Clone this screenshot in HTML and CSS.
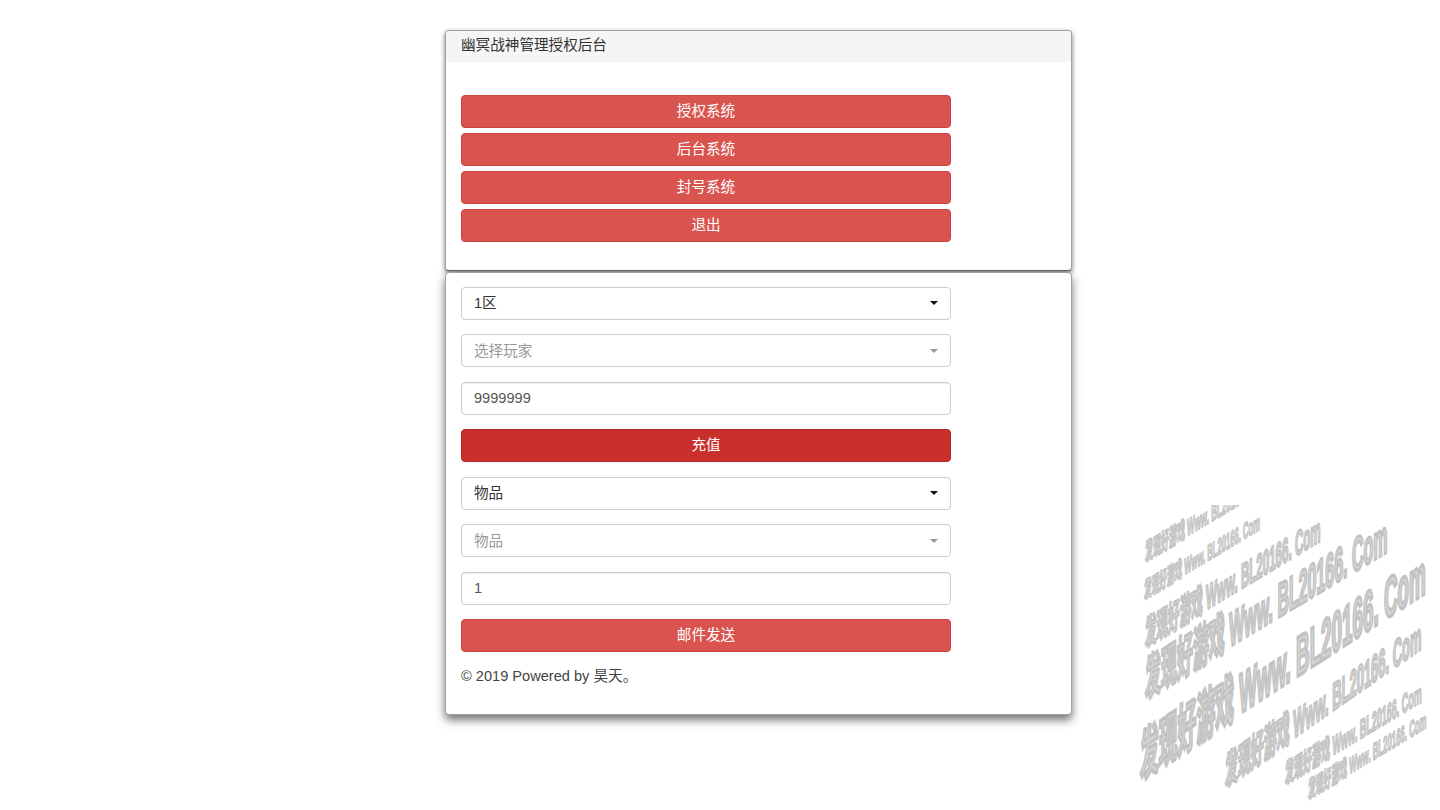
FILE: index.html
```html
<!DOCTYPE html>
<html lang="en">

<head>
    <meta charset="UTF-8" />
    <meta name="viewport" content="width=device-width, initial-scale=1" />
    <title>幽冥战神管理授权后台</title>
    <link rel="stylesheet" href="styles.css">
</head>

<body>

    <main class="page">
        <section class="panel panel-top">
            <div class="panel-heading">幽冥战神管理授权后台</div>
            <div class="panel-body menu-body">
                <button class="btn">授权系统</button>
                <button class="btn">后台系统</button>
                <button class="btn">封号系统</button>
                <button class="btn">退出</button>
            </div>
        </section>

        <section class="panel panel-bottom">
            <div class="panel-body form-body">
                <button class="picker"><span>1区</span><span class="caret"></span></button>
                <button class="picker muted"><span>选择玩家</span><span class="caret"></span></button>
                <input class="field" type="text" value="9999999">
                <button class="btn btn-active">充值</button>
                <button class="picker"><span>物品</span><span class="caret"></span></button>
                <button class="picker muted"><span>物品</span><span class="caret"></span></button>
                <input class="field" type="text" value="1">
                <button class="btn">邮件发送</button>
                <p class="copyright">© 2019 Powered by 昊天。</p>
            </div>
        </section>
    </main>

    <!-- watermark, bottom right corner -->
    <div class="watermark">
        <div class="wm wm-1">发现好游戏 Www. BL20166. Com</div>
        <div class="wm wm-2">发现好游戏 Www. BL20166. Com</div>
        <div class="wm wm-3">发现好游戏 Www. BL20166. Com</div>
        <div class="wm wm-4">发现好游戏 Www. BL20166. Com</div>
        <div class="wm wm-5">发现好游戏 Www. BL20166. Com</div>
        <div class="wm wm-6">发现好游戏 Www. BL20166. Com</div>
        <div class="wm wm-7">发现好游戏 Www. BL20166. Com</div>
        <div class="wm wm-8">发现好游戏 Www. BL20166. Com</div>
    </div>

</body>

</html>
```

FILE: styles.css
```css
* {
    box-sizing: border-box;
}

html,
body {
    height: 100%;
}

body {
    margin: 0;
    font-family: "Liberation Sans", "Noto Sans CJK SC", sans-serif;
    font-size: 14.6px;
    color: #333;
    background: #fff;
    overflow: hidden;
}

/* --- PANELS --- */
.page {
    width: 627px;
    margin-left: 445px;
    padding-top: 30px;
}

.panel {
    background: #fff;
    border: 1px solid #a0a0a0;
    border-radius: 4px;
    box-shadow: 0 2px 5px rgba(0, 0, 0, 0.55);
}

.panel-top {
    height: 241px;
    margin-bottom: 1px;
    border-bottom-color: #666;
}

.panel-bottom {
    height: 443px;
    box-shadow: 0 5px 10px rgba(0, 0, 0, 0.55);
}

.panel-heading {
    height: 31px;
    padding: 7px 15px;
    line-height: 15px;
    color: #333;
    background: #f5f5f5;
    border-radius: 3px 3px 0 0;
}

.panel-body {
    width: 505px;
    padding: 0 0 0 15px;
}

.menu-body {
    padding-top: 33px;
}

.menu-body .btn {
    margin-bottom: 5px;
}

.form-body {
    padding-top: 13.75px;
}

/* --- CONTROLS --- */
.btn,
.picker,
.field {
    display: block;
    width: 490px;
    height: 33px;
    border-radius: 4px;
    font-family: inherit;
    font-size: 14.6px;
}

.btn {
    padding: 0 0 4px;
    color: #fff;
    background: #d9534f;
    border: 1px solid #c9423e;
    text-align: center;
}

.btn-active {
    background: #c9302c;
    border-color: #ac2925;
}

.picker {
    display: flex;
    justify-content: space-between;
    align-items: center;
    padding: 0 12px 3px;
    color: #333;
    background: #fff;
    border: 1px solid #ccc;
}

.picker.muted {
    color: #999;
}

.caret {
    width: 0;
    height: 0;
    margin-top: 3px;
    border-top: 4px solid #111;
    border-left: 4px solid transparent;
    border-right: 4px solid transparent;
}

.muted .caret {
    border-top-color: #999;
}

.field {
    padding: 0 12px;
    color: #555;
    background: #fff;
    border: 1px solid #ccc;
    box-shadow: inset 0 1px 1px rgba(0, 0, 0, 0.075);
}

.form-body > * {
    margin-bottom: 14.5px;
}

.copyright {
    margin: 0;
    line-height: 19px;
    color: #444;
}

/* --- WATERMARK --- */
.watermark {
    position: absolute;
    left: 1120px;
    top: 505px;
    width: 320px;
    height: 300px;
    overflow: hidden;
}

.wm {
    position: absolute;
    line-height: 1;
    font-weight: bold;
    white-space: nowrap;
    color: #d6d6d6;
    -webkit-text-stroke: 0.07em #c2c2c2;
    transform-origin: left bottom;
    transform: skewY(-31deg) scale(0.57, 1.7);
}

.wm-1 {
    left: 25px;
    bottom: 240px;
    font-size: 14px;
}

.wm-2 {
    left: 24px;
    bottom: 202px;
    font-size: 13.4px;
}

.wm-3 {
    left: 25px;
    bottom: 153px;
    font-size: 20.3px;
}

.wm-4 {
    left: 25px;
    bottom: 99px;
    font-size: 28px;
}

.wm-5 {
    left: 20px;
    bottom: 18px;
    font-size: 33px;
    transform: skewY(-33deg) scale(0.57, 1.7);
}

.wm-6 {
    left: 105px;
    bottom: 12px;
    font-size: 22.7px;
    transform: skewY(-35deg) scale(0.57, 1.7);
}

.wm-7 {
    left: 165px;
    bottom: 16px;
    font-size: 15.8px;
}

.wm-8 {
    left: 188px;
    bottom: 1px;
    font-size: 13.7px;
}
```
